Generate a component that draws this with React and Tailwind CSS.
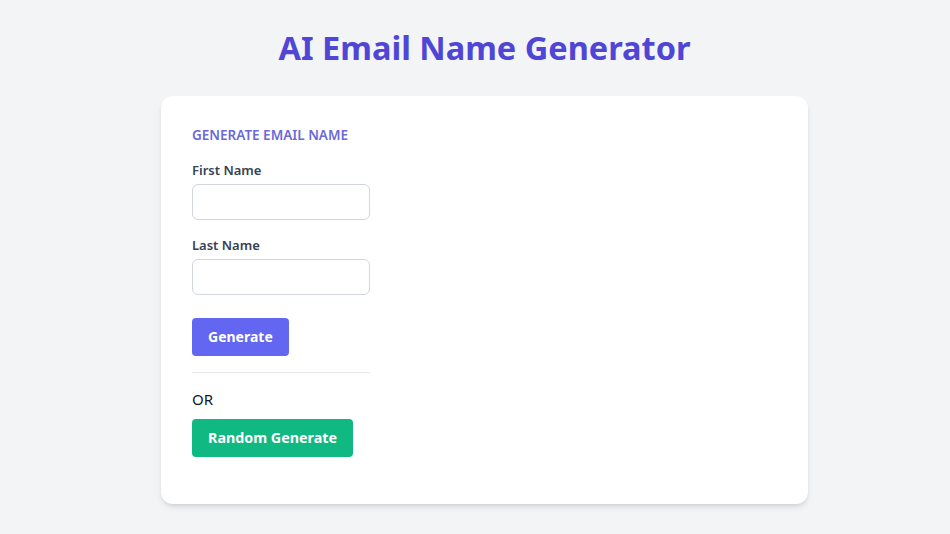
export default function App() {
  return (
    <div
      className="min-h-screen bg-[#f3f4f6] pt-[28px] pb-8 pl-[19px]"
      style={{ fontFamily: '"Noto Sans", "Open Sans", sans-serif' }}
    >
      <h1 className="text-center text-[32.5px] leading-10 font-bold text-[#4f46d6]">
        AI Email Name Generator
      </h1>

      <div className="mx-auto mt-[28px] w-[647px] rounded-xl bg-white px-[31px] pt-[29px] pb-[47px] shadow-md">
        <h2 className="text-[13.5px] leading-5 font-semibold uppercase text-[#6b68d8]">
          Generate Email Name
        </h2>

        <div className="w-[178px]">
          <label className="mt-[15px] block text-[13px] leading-5 font-semibold text-gray-700">
            First Name
          </label>
          <input
            type="text"
            className="mt-[4px] block h-9 w-full rounded-md border border-gray-300 px-3 text-sm focus:outline-none"
          />

          <label className="mt-[15px] block text-[13px] leading-5 font-semibold text-gray-700">
            Last Name
          </label>
          <input
            type="text"
            className="mt-[4px] block h-9 w-full rounded-md border border-gray-300 px-3 text-sm focus:outline-none"
          />

          <button className="mt-[23px] h-[38px] rounded bg-[#6366f1] px-4 text-sm font-bold text-white">
            Generate
          </button>

          <hr className="mt-4 border-gray-200" />

          <p className="mt-[16px] text-[15px] leading-5 text-gray-900">OR</p>

          <button className="mt-[10px] h-[38px] rounded bg-[#10b981] px-4 text-[14.3px] font-bold text-white">
            Random Generate
          </button>
        </div>
      </div>
    </div>
  );
}
